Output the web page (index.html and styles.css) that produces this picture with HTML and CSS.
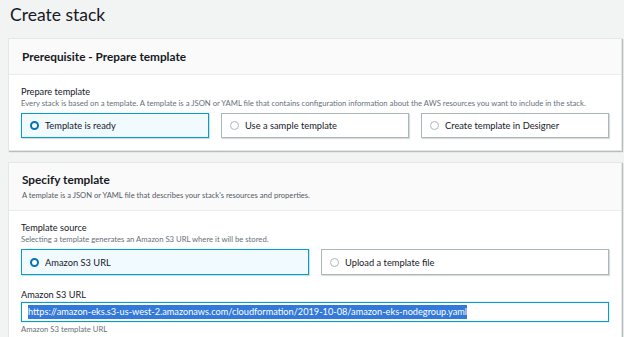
FILE: index.html
```html
<!DOCTYPE html>
<html lang="en">
<head>
    <meta charset="UTF-8">
    <title>Create stack</title>
    <link rel="stylesheet" href="styles.css">
</head>
<body>
    <h1 class="page-title">Create stack</h1>

    <div class="panel">
        <div class="panel-header">
            <h2>Prerequisite - Prepare template</h2>
        </div>
        <div class="panel-body">
            <div class="field-label">Prepare template</div>
            <div class="field-desc">Every stack is based on a template. A template is a JSON or YAML file that contains configuration information about the AWS resources you want to include in the stack.</div>
            <div class="tiles three">
                <div class="tile selected"><span class="radio"></span>Template is ready</div>
                <div class="tile"><span class="radio"></span>Use a sample template</div>
                <div class="tile"><span class="radio"></span>Create template in Designer</div>
            </div>
        </div>
    </div>

    <div class="panel">
        <div class="panel-header tall">
            <h2>Specify template</h2>
            <div class="header-desc">A template is a JSON or YAML file that describes your stack's resources and properties.</div>
        </div>
        <div class="panel-body">
            <div class="field-label">Template source</div>
            <div class="field-desc">Selecting a template generates an Amazon S3 URL where it will be stored.</div>
            <div class="tiles two">
                <div class="tile selected"><span class="radio"></span>Amazon S3 URL</div>
                <div class="tile"><span class="radio"></span>Upload a template file</div>
            </div>
            <div class="field-label url-label">Amazon S3 URL</div>
            <div class="url-input"><span class="sel">https://amazon-eks.s3-us-west-2.amazonaws.com/cloudformation/2019-10-08/amazon-eks-nodegroup.yaml</span></div>
            <div class="field-desc hint">Amazon S3 template URL</div>
        </div>
    </div>
</body>
</html>
```

FILE: styles.css
```css
body {
    margin: 0;
    padding: 0 2px 0 8px;
    background-color: #f2f3f3;
    color: #16191f;
    font-family: Lato, "Open Sans", Arial, sans-serif;
}
.page-title {
    font-size: 17.5px;
    font-weight: 400;
    margin: 0;
    padding: 3px 0 0 2px;
    height: 35px;
    line-height: 24px;
}
.panel {
    background-color: white;
    border: 1px solid #e4e7e7;
    box-shadow: 1px 1px 1px rgba(0, 28, 36, 0.25);
    margin-bottom: 11px;
}
.panel-header {
    background-color: #fafafa;
    border-bottom: 1px solid #eaeded;
    height: 35px;
    padding: 0 13px;
    display: flex;
    flex-direction: column;
    justify-content: center;
}
.panel-header.tall {
    height: 47px;
}
.panel-header h2 {
    font-size: 11.8px;
    font-weight: 700;
    margin: 0;
    line-height: 16px;
}
.header-desc {
    font-size: 7.6px;
    color: #545b64;
    line-height: 12px;
    margin-top: 1px;
}
.panel-body {
    padding: 10px 12px 12px 12px;
}
.field-label {
    font-size: 9.2px;
    line-height: 13px;
}
.field-desc {
    font-size: 7.7px;
    color: #687078;
    line-height: 10px;
}
.tiles {
    display: grid;
    gap: 12px;
    margin-top: 5px;
}
.tiles.three {
    grid-template-columns: repeat(3, 1fr);
}
.tiles.two {
    grid-template-columns: repeat(2, 1fr);
}
.tile {
    border: 1px solid #aab7b8;
    height: 25px;
    box-sizing: border-box;
    display: flex;
    align-items: center;
    padding-left: 8px;
    font-size: 9.3px;
    box-shadow: 1px 1px 1px rgba(0, 28, 36, 0.15);
}
.tiles.two .tile {
    height: 26px;
}
.tile.selected {
    background-color: #f1faff;
    border-color: #00a1c9;
}
.radio {
    width: 9px;
    height: 9px;
    box-sizing: border-box;
    border: 1px solid #aab7b8;
    border-radius: 50%;
    margin-right: 6px;
    background: white;
}
.tile.selected .radio {
    border: 2.5px solid #0073bb;
}
.url-label {
    margin-top: 13px;
    margin-bottom: 1px;
}
.url-input {
    border: 1px solid #00a1c9;
    height: 20px;
    box-sizing: border-box;
    display: flex;
    align-items: center;
    padding-left: 6px;
    font-size: 9.2px;
    box-shadow: 0 0 0 1px #e6f4f8;
}
.sel {
    background-color: #3379d9;
    color: white;
    line-height: 14px;
}
.hint {
    margin-top: 2px;
}
```
